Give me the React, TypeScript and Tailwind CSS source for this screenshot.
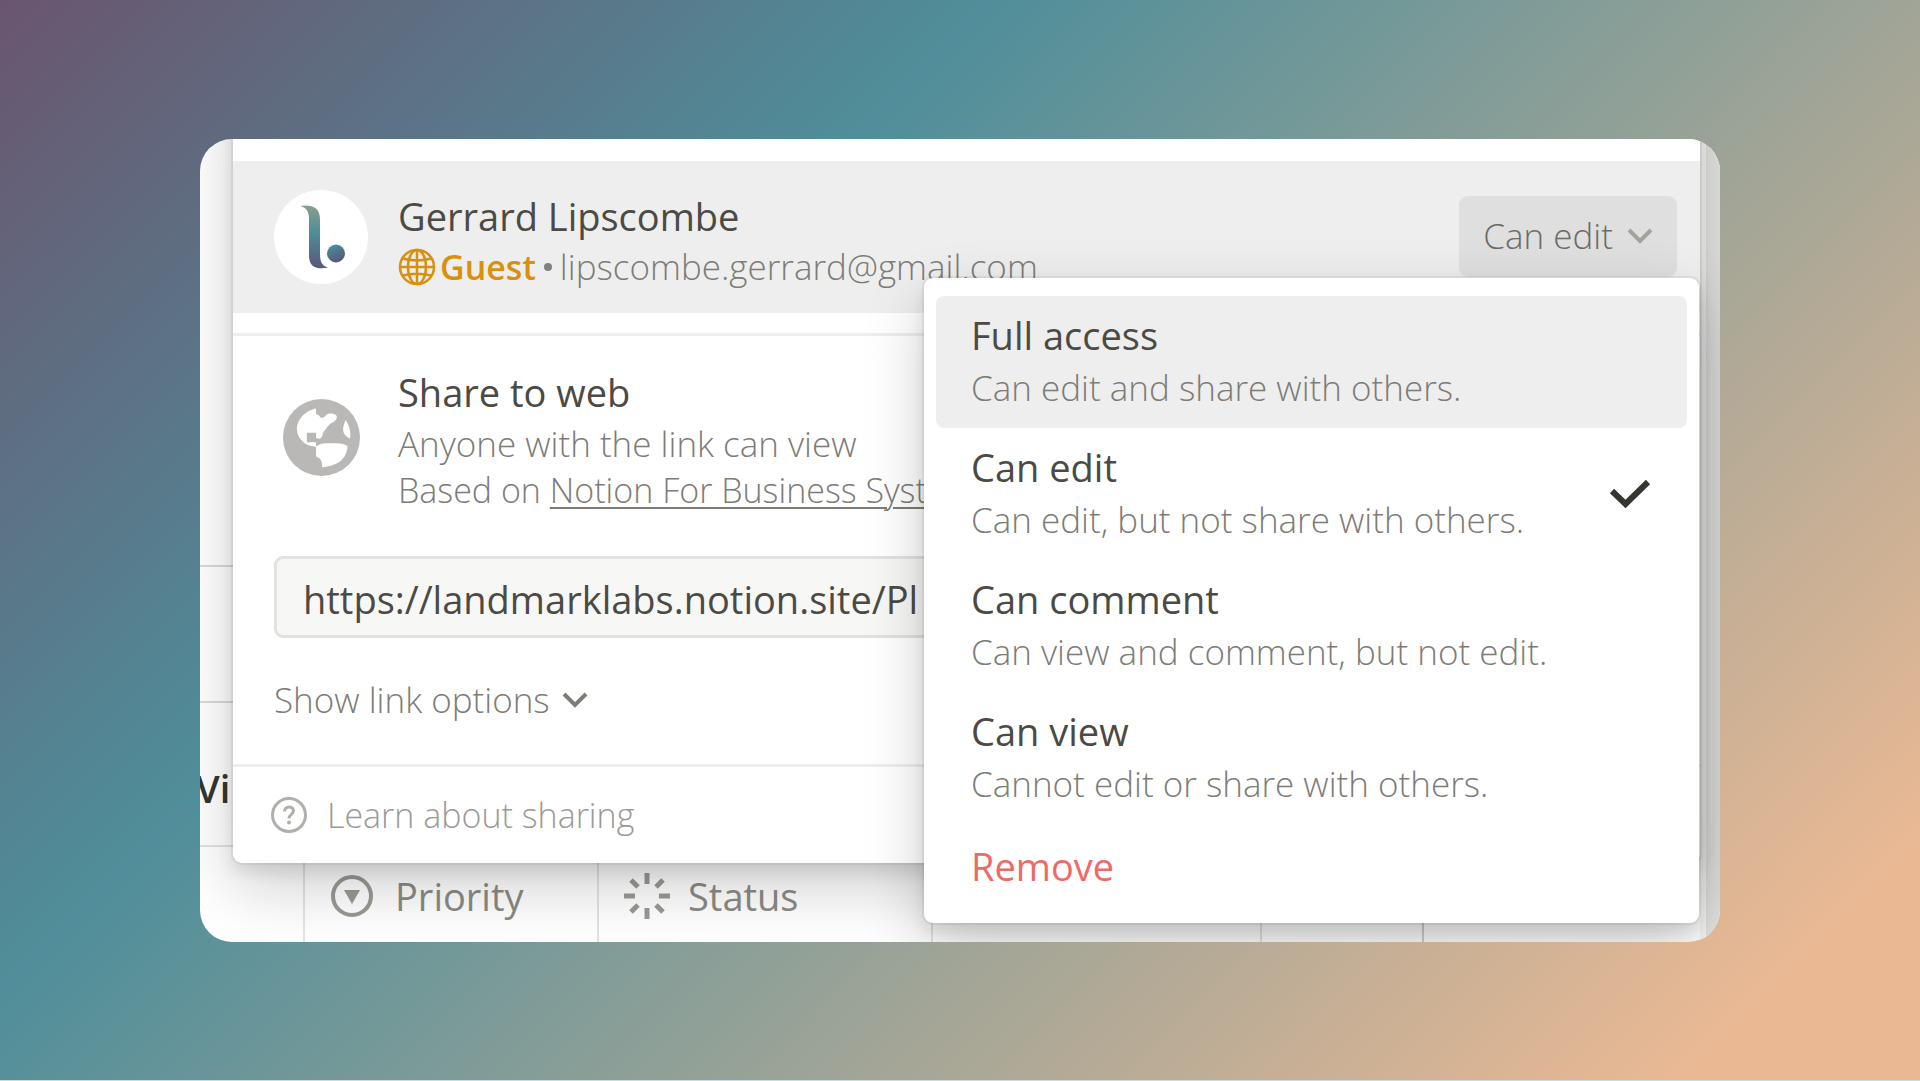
import { useState } from "react";

interface AccessOption {
  id: string;
  title: string;
  description: string;
}

const OPTIONS: AccessOption[] = [
  { id: "full", title: "Full access", description: "Can edit and share with others." },
  { id: "edit", title: "Can edit", description: "Can edit, but not share with others." },
  { id: "comment", title: "Can comment", description: "Can view and comment, but not edit." },
  { id: "view", title: "Can view", description: "Cannot edit or share with others." },
];

function BrandLogo() {
  return (
    <svg viewBox="0 0 94 94" className="size-[94px] shrink-0" aria-hidden="true">
      <defs>
        <linearGradient id="stem" x1="0" y1="0" x2="0" y2="1">
          <stop offset="0" stopColor="#8a9e90" />
          <stop offset="0.45" stopColor="#4b8d99" />
          <stop offset="1" stopColor="#5b5677" />
        </linearGradient>
        <linearGradient id="dot" x1="0.3" y1="0" x2="0.7" y2="1">
          <stop offset="0" stopColor="#4690a0" />
          <stop offset="1" stopColor="#5d5275" />
        </linearGradient>
      </defs>
      <circle cx="47" cy="47" r="47" fill="#fff" />
      <path
        d="M26 16C37 14 46 17 46 29V63C46 72 48 76 54 77.5C43 80 35 77 35 66V29C35 22 33 17.500 26 16Z"
        fill="url(#stem)"
      />
      <circle cx="62" cy="63.500" r="9" fill="url(#dot)" />
    </svg>
  );
}

function EarthIcon() {
  return (
    <svg viewBox="25 22 226 226" className="size-[77px] shrink-0" aria-hidden="true">
      <circle cx="138" cy="135" r="113" fill="#b9b8b6" />
      <g fill="#fff">
        <path d="M122 50V66C127 67 131 70 135 76C141 79 147 76 151 70C156 64 165 64 175 66C182 68 185 73 182 80C178 89 169 90 162 96C153 104 152 110 146 116C140 122 143 133 134 138C129 140 125 138 122 136V121H95V149H122V162C129 156 138 152 150 152H182C196 152 206 155 214 160C215 174 209 188 198 200C186 212 165 220 140 222C139 213 140 205 134 198C129 193 122 194 122 185V163C110 160 98 159 89 152C76 142 67 130 66 113C64 88 87 56 122 50Z" />
        <path d="M208 84C219 98 225 116 222 138C213 134 206 128 203 120C199 109 204 98 208 84Z" />
      </g>
    </svg>
  );
}

function GuestGlobeIcon() {
  return (
    <svg
      viewBox="0 0 38 38"
      className="size-[38px] shrink-0"
      fill="none"
      stroke="currentColor"
      strokeWidth="2.500"
      aria-hidden="true"
    >
      <circle cx="19" cy="19" r="17" />
      <ellipse cx="19" cy="19" rx="9" ry="17" />
      <path d="M19 2V36M2 19H36M5 10.500C13 13 25 13 33 10.500M5 27.500C13 25 25 25 33 27.500" />
    </svg>
  );
}

function ChevronIcon() {
  return (
    <svg
      viewBox="0 0 26 18"
      className="h-[18px] w-[26px] shrink-0"
      fill="none"
      stroke="currentColor"
      strokeWidth="4"
      aria-hidden="true"
    >
      <path d="M2 3L13 14L24 3" />
    </svg>
  );
}

function CheckIcon() {
  return (
    <svg viewBox="0 0 42 30" className="h-[30px] w-[42px] shrink-0" aria-hidden="true">
      <path d="M3 12L16.500 25L39 3" fill="none" stroke="#37352f" strokeWidth="6" />
    </svg>
  );
}

function HelpIcon() {
  return (
    <svg viewBox="0 0 36 36" className="size-9 shrink-0" fill="none" stroke="currentColor" aria-hidden="true">
      <circle cx="18" cy="18" r="16.500" strokeWidth="3" />
      <path d="M13.500 14.500C13.500 8.500 22.500 8.500 22.500 14C22.500 17.500 18 17.500 18 21.500" strokeWidth="3" />
      <circle cx="18" cy="25.500" r="2" fill="currentColor" stroke="none" />
    </svg>
  );
}

function PriorityIcon() {
  return (
    <svg viewBox="0 0 42 42" className="size-[42px] shrink-0 text-[#9a9994]" aria-hidden="true">
      <circle cx="21" cy="21" r="19" fill="none" stroke="currentColor" strokeWidth="4" />
      <path d="M13 15H29L21 29Z" fill="currentColor" />
    </svg>
  );
}

function StatusIcon() {
  return (
    <svg
      viewBox="0 0 46 46"
      className="size-[46px] shrink-0 text-[#9a9994]"
      fill="none"
      stroke="currentColor"
      strokeWidth="5"
      aria-hidden="true"
    >
      <path d="M23 0V11M23 35V46M0 23H11M35 23H46M7 7L14 14M32 32L39 39M39 7L32 14M14 32L7 39" />
    </svg>
  );
}

// Page behind the share dialog
function DatabasePage() {
  return (
    <div className="flex text-[38px] leading-[48px]">
      <div className="min-w-0 grow">
        <div className="h-[428px] border-b-2 border-[#d9d9d8]" />
        <div className="h-[136px] border-b-2 border-[#d9d9d8]" />
        <div className="flex h-[144px] items-center border-b-2 border-[#e3e3e2] pt-7">
          <span className="-ml-1 font-semibold text-[#37352f]">Vi</span>
        </div>
        <table className="h-[95px] w-full table-fixed border-collapse text-[#8b8a85]">
          <thead>
            <tr>
              <th className="w-[104px] border-r-2 border-[#e3e3e2]" />
              <th className="w-[294px] border-r-2 border-[#e3e3e2] p-0 font-normal">
                <div className="flex items-center gap-[22px] pt-1 pl-[26px]">
                  <PriorityIcon />
                  Priority
                </div>
              </th>
              <th className="w-[334px] border-r-2 border-[#e3e3e2] p-0 font-normal">
                <div className="flex items-center gap-[18px] pt-1 pl-[25px]">
                  <StatusIcon />
                  Status
                </div>
              </th>
              <th className="w-[329px] border-r-2 border-[#e3e3e2]" />
              <th className="w-[162px] border-r-2 border-[#d0d0cf]" />
              <th />
            </tr>
          </thead>
        </table>
      </div>
      <div className="w-5 shrink-0 border-l-[6px] border-[#f6f6f5] bg-[#e2e2e0]" />
    </div>
  );
}

interface AccessMenuProps {
  selected: string;
  onSelect: (id: string) => void;
}

function AccessMenu({ selected, onSelect }: AccessMenuProps) {
  return (
    <div
      role="menu"
      className="absolute top-[82px] -right-[22px] z-10 w-[775px] rounded-[9px] bg-white px-3 pt-[18px] pb-3.5 shadow-[0_0_0_2px_rgba(15,15,15,0.05),0_8px_16px_rgba(15,15,15,0.1),0_24px_62px_rgba(15,15,15,0.2)]"
    >
      {OPTIONS.map((option, i) => (
        <button
          key={option.id}
          type="button"
          role="menuitemradio"
          aria-checked={option.id === selected}
          onClick={() => onSelect(option.id)}
          className={`flex h-[132px] w-full items-center justify-between rounded-lg pr-9 pl-[35px] text-left ${
            i === 0 ? "bg-[#eeeeee]" : "bg-white"
          }`}
        >
          <span className="flex flex-col">
            <span className="text-[38px] leading-[52px] text-[#4b4a44]">{option.title}</span>
            <span className="text-[35px] leading-[54px] font-light text-[#7d7c77]">{option.description}</span>
          </span>
          {option.id === selected && <CheckIcon />}
        </button>
      ))}
      <button
        type="button"
        role="menuitem"
        className="flex h-[85px] w-full items-center pl-[35px] text-[38px] leading-[48px] text-[#ee6a6a]"
      >
        Remove
      </button>
    </div>
  );
}

function ShareDialog() {
  const [access, setAccess] = useState("edit");

  return (
    <div className="absolute -top-16 right-5 left-[33px] rounded-[9px] bg-white pt-[86px] shadow-[0_0_0_2px_rgba(15,15,15,0.05),0_8px_16px_rgba(15,15,15,0.1),0_24px_62px_rgba(15,15,15,0.2)]">
      <div className="flex items-start gap-[30px] bg-[#eeeeee] pt-[29px] pr-[23px] pb-[23px] pl-[41px]">
        <BrandLogo />
        <div className="flex min-w-0 grow flex-col gap-1 pt-0.5">
          <div className="text-[38px] leading-[48px] text-[#4b4a44]">Gerrard Lipscombe</div>
          <div className="flex items-center text-[35px] leading-[46px] font-light text-[#7d7c77]">
            <span className="flex items-center gap-1 text-[34px] font-semibold text-[#d9900d]">
              <GuestGlobeIcon />
              Guest
            </span>
            <span className="mx-2 size-2 rounded-full bg-[#82817d]" />
            <span>lipscombe.gerrard@gmail.com</span>
          </div>
        </div>
        <div className="relative mt-1.5 shrink-0">
          <button
            type="button"
            aria-haspopup="menu"
            className="flex h-[81px] items-center gap-[14px] rounded-[9px] bg-[#dfdfdf] px-6 text-[35px] leading-[44px] font-light text-[#6d6c68]"
          >
            Can edit
            <span className="text-[#a3a29f]">
              <ChevronIcon />
            </span>
          </button>
          <AccessMenu selected={access} onSelect={setAccess} />
        </div>
      </div>

      <div className="mt-5 border-t-[3px] border-[#eeeeee] px-[41px] pt-[31px]">
        <div className="flex items-start gap-[30px]">
          <div className="flex w-[94px] shrink-0 justify-center pt-8">
            <EarthIcon />
          </div>
          <div className="text-[35px] leading-[47px] font-light text-[#7d7c77]">
            <div className="mb-[3px] text-[38px] leading-[50px] font-normal text-[#4b4a44]">Share to web</div>
            <div>Anyone with the link can view</div>
            <div className="text-[34px]">
              Based on{" "}
              <a href="#template" className="underline decoration-2 underline-offset-4">
                Notion For Business Systems
              </a>
            </div>
          </div>
        </div>
        <input
          type="text"
          readOnly
          aria-label="Public link"
          value="https://landmarklabs.notion.site/Pl"
          className="mt-[42px] block h-[82px] w-full rounded-[9px] border-[3px] border-[#e2e2e1] bg-[#f7f7f5] px-[26px] pt-1 text-[38px] text-[#4b4a44] outline-none"
        />
        <button
          type="button"
          className="mt-10 mb-[42px] flex items-center gap-3 text-[35px] leading-[44px] font-light text-[#7d7c77]"
        >
          Show link options
          <ChevronIcon />
        </button>
      </div>

      <a
        href="#learn"
        className="flex h-[99px] items-center gap-5 border-t-[3px] border-[#eeeeee] px-[38px] text-[34px] leading-[44px] font-light text-[#9b9a97]"
      >
        <span className="text-[#b0afac]">
          <HelpIcon />
        </span>
        Learn about sharing
      </a>
    </div>
  );
}

export default function App() {
  return (
    <div className="flex min-h-screen items-center border-b border-[#c9dcdf] bg-[linear-gradient(135deg,#6a556f_0%,#4f8e9a_33%,#eab994_92%)] px-[200px] font-['Open_Sans','Noto_Sans',sans-serif]">
      <div className="relative w-full overflow-hidden rounded-[32px] bg-white">
        <DatabasePage />
        <ShareDialog />
      </div>
    </div>
  );
}
